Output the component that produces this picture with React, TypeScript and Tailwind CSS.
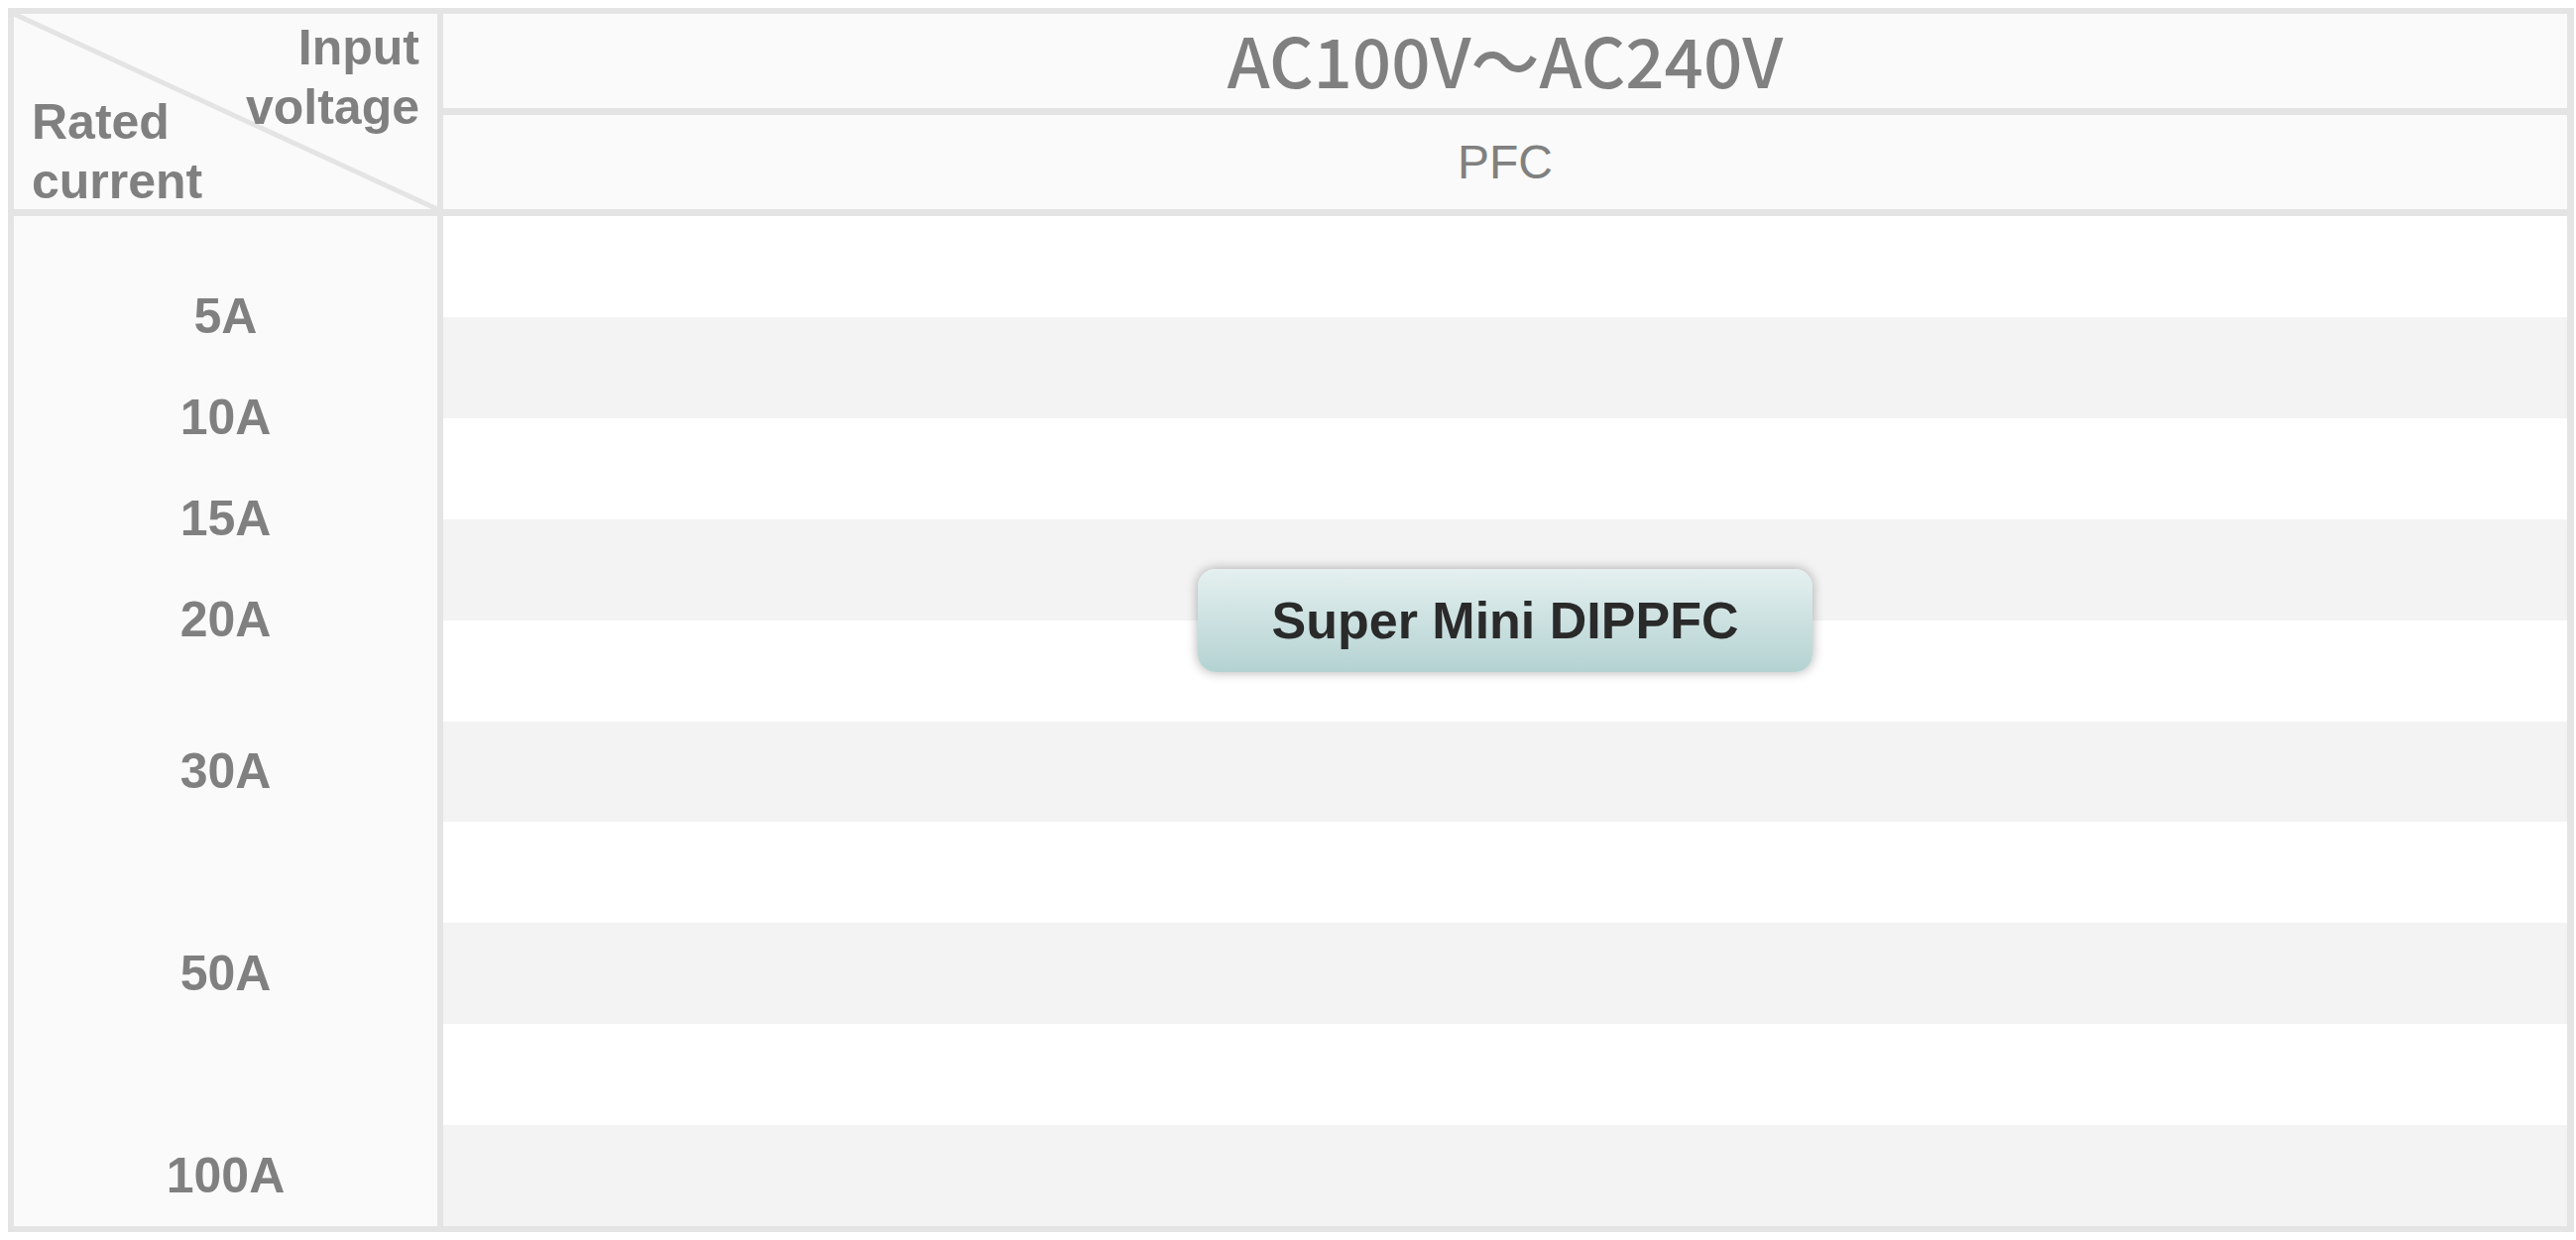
import React from 'react'

// Filas de corriente: cada una ocupa medias filas del cuerpo (20 en total)
const etiquetas: { texto: string; span: 'uno' | 'dos' }[] = [
  { texto: '', span: 'uno' },
  { texto: '5A', span: 'dos' },
  { texto: '10A', span: 'dos' },
  { texto: '15A', span: 'dos' },
  { texto: '20A', span: 'dos' },
  { texto: '', span: 'uno' },
  { texto: '30A', span: 'dos' },
  { texto: '', span: 'dos' },
  { texto: '50A', span: 'dos' },
  { texto: '', span: 'dos' },
  { texto: '100A', span: 'dos' },
]

const franjas = Array.from({ length: 10 }, (_, i) => i)

const App = () => {
  return (
    <div className="min-h-screen bg-white pt-[8px] pb-[8px] pl-[8px]">
      <div className="w-[2588px] h-[1235px] border-t-[6px] border-b-[6px] border-l-[6px] border-r-[7px] border-[#e4e4e4] bg-[#e4e4e4] grid grid-cols-[427px_1fr] grid-rows-[95px_95px_1fr] gap-x-[6px] gap-y-[7px]">
        {/* Celda diagonal */}
        <div className="row-span-2 relative bg-[#fafafa] grid font-['Liberation_Sans',sans-serif] font-bold text-[50px] leading-[60px] text-[#808080]">
          <svg className="absolute inset-0 w-full h-full" preserveAspectRatio="none" viewBox="0 0 100 100">
            <line x1="0" y1="0" x2="100" y2="100" stroke="#e4e4e4" strokeWidth="5" vectorEffect="non-scaling-stroke" />
          </svg>
          <div className="relative col-start-1 row-start-1 self-start justify-self-end text-right pt-[4px] pr-[18px]">
            <div>Input</div>
            <div>voltage</div>
          </div>
          <div className="relative col-start-1 row-start-1 self-end justify-self-start pl-[18px] mb-[-2px]">
            <div>Rated</div>
            <div>current</div>
          </div>
        </div>

        <div className="bg-[#fafafa] flex items-center justify-center pb-[4px] font-['Noto_Sans_CJK_JP',sans-serif] font-medium text-[69px] leading-none text-[#808080]">
          AC100V～AC240V
        </div>
        <div className="bg-[#fafafa] flex items-center justify-center font-['Liberation_Sans',sans-serif] text-[48px] text-[#808080]">
          PFC
        </div>

        {/* Columna de corrientes */}
        <div className="bg-[#fafafa] flex flex-col font-['Liberation_Sans',sans-serif] font-bold text-[50px] text-[#808080]">
          {etiquetas.map((e, i) => (
            <div
              key={i}
              className={`${e.span === 'uno' ? 'flex-[1]' : 'flex-[2]'} min-h-0 flex items-center justify-center`}
            >
              {e.texto}
            </div>
          ))}
        </div>

        {/* Cuerpo con franjas */}
        <div className="grid grid-cols-1 grid-rows-[repeat(20,minmax(0,1fr))] bg-white">
          {franjas.map((i) => (
            <div
              key={i}
              className={`col-start-1 row-span-2 ${i % 2 === 0 ? 'bg-white' : 'bg-[#f3f3f3]'}`}
              style={{ gridRowStart: i * 2 + 1 }}
            />
          ))}
          <div className="col-start-1 row-start-8 row-span-2 justify-self-center w-[620px] my-[-1px] rounded-[18px] bg-linear-to-b from-[#e5f0f0] to-[#b4d2d2] shadow-[0_0_12px_rgba(0,0,0,0.32)] flex items-center justify-center font-['Liberation_Sans',sans-serif] font-bold text-[52px] text-[#2a2a2a] z-10">
            Super Mini DIPPFC
          </div>
        </div>
      </div>
    </div>
  )
}

export default App
